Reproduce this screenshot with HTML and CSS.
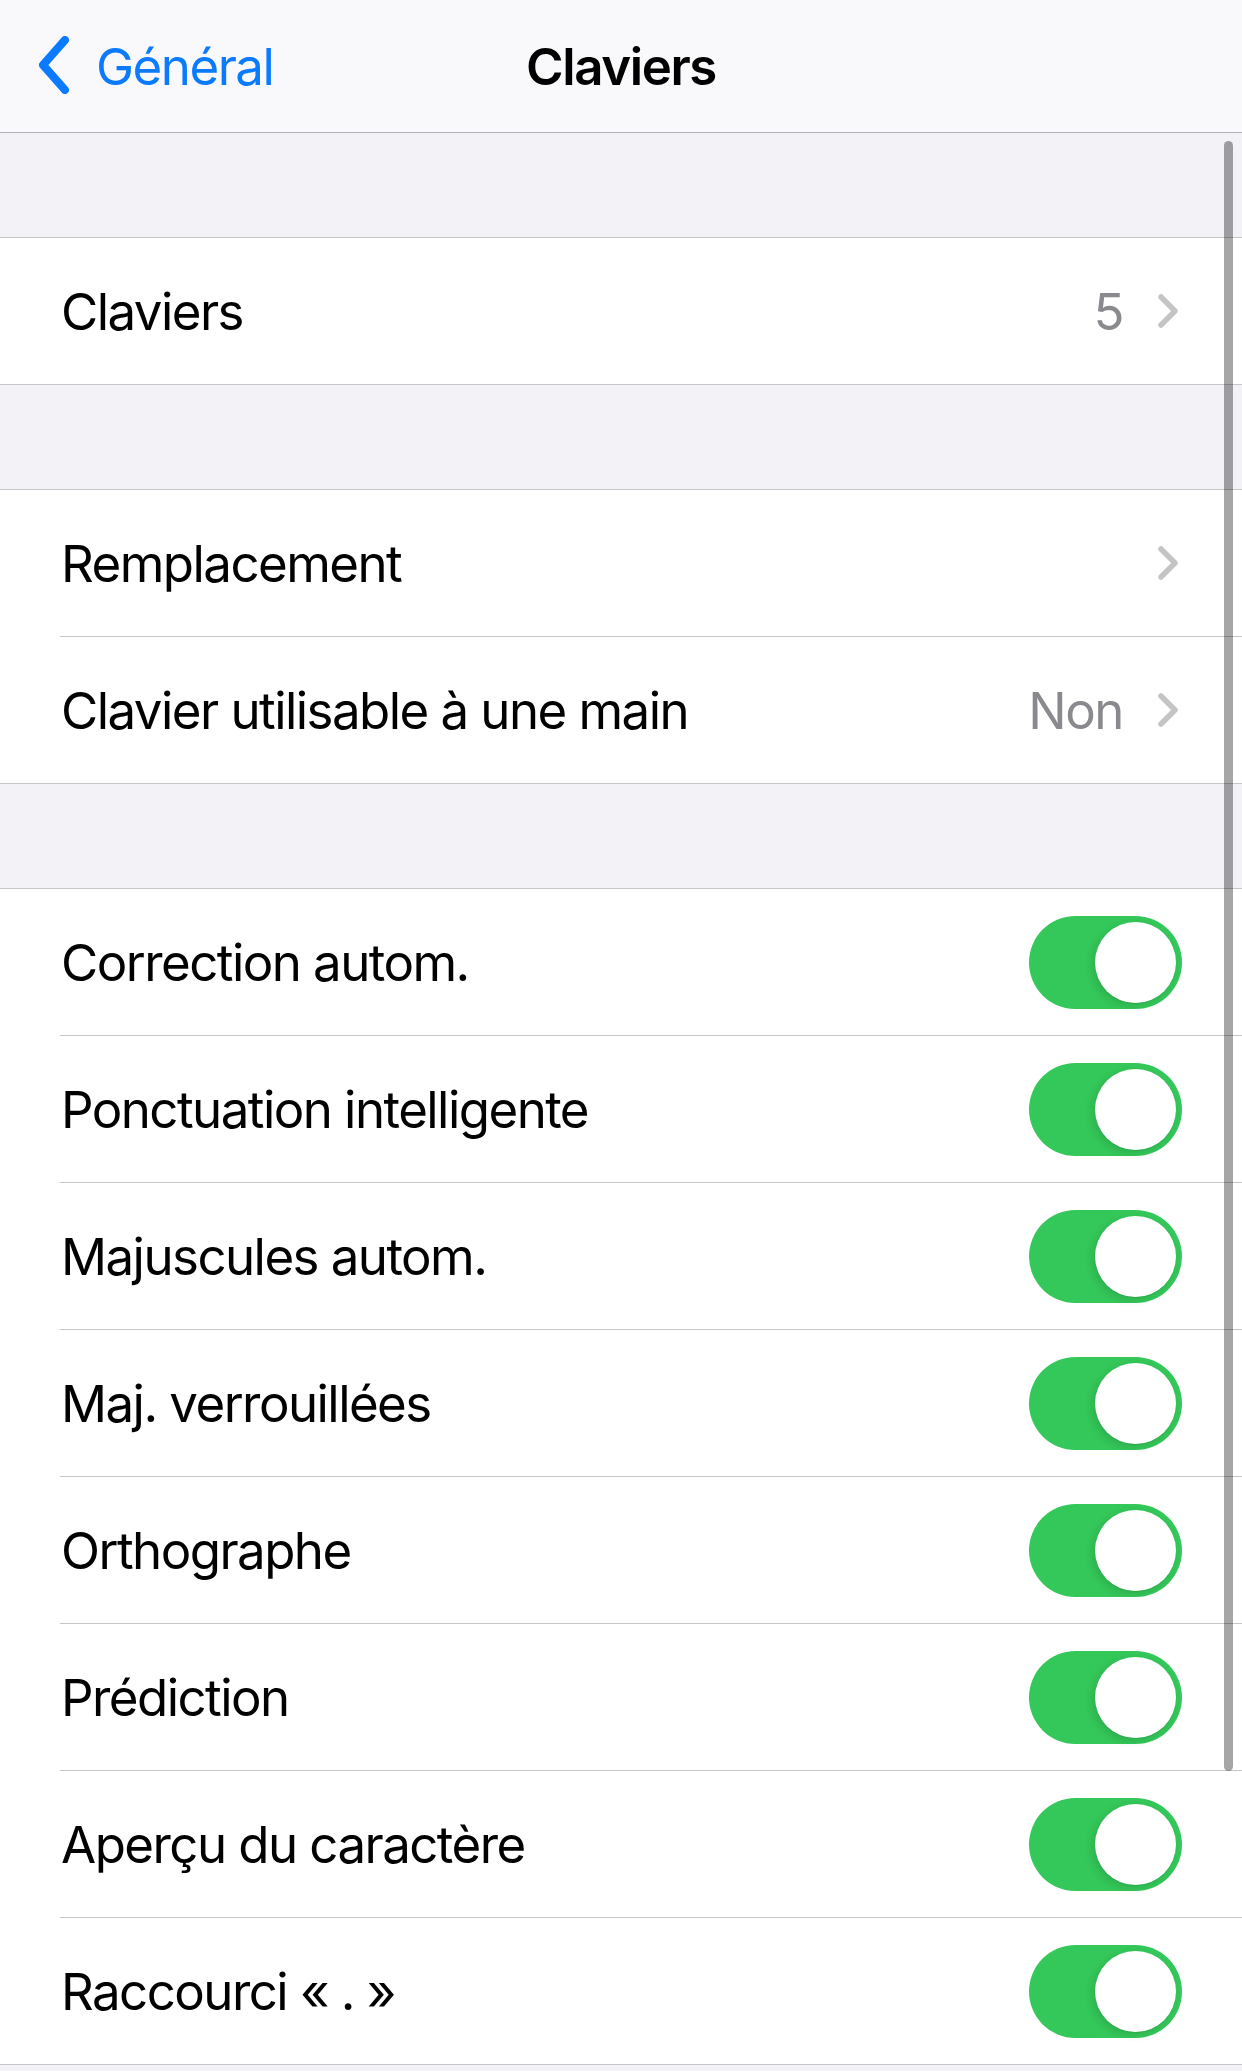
FILE: index.html
```html
<!DOCTYPE html>
<html lang="fr">
<head>
    <meta charset="UTF-8">
    <meta name="viewport" content="width=device-width, initial-scale=1.0">
    <title>Claviers</title>
    <link rel="stylesheet" href="styles.css">
</head>
<body>

<div class="navbar">
    <div class="back">
        <svg class="back-chevron" width="34" height="58" viewBox="0 0 34 58">
            <path d="M28 4 L6 29 L28 54" fill="none" stroke="#0a7aff" stroke-width="8" stroke-linecap="round" stroke-linejoin="round"/>
        </svg>
        <span>Général</span>
    </div>
    <div class="nav-title">Claviers</div>
</div>

<div class="section">
    <div class="row">
        <div class="row-inner">
            <span class="label">Claviers</span>
            <span class="value">5</span>
            <svg class="chevron" width="22" height="36" viewBox="0 0 22 36"><path d="M4 4 L18 18 L4 32" fill="none" stroke="#c4c4c7" stroke-width="5.5" stroke-linecap="round" stroke-linejoin="round"/></svg>
        </div>
    </div>
</div>

<div class="section">
    <div class="row">
        <div class="row-inner">
            <span class="label">Remplacement</span>
            <svg class="chevron" width="22" height="36" viewBox="0 0 22 36"><path d="M4 4 L18 18 L4 32" fill="none" stroke="#c4c4c7" stroke-width="5.5" stroke-linecap="round" stroke-linejoin="round"/></svg>
        </div>
    </div>
    <div class="row">
        <div class="row-inner">
            <span class="label">Clavier utilisable à une main</span>
            <span class="value">Non</span>
            <svg class="chevron" width="22" height="36" viewBox="0 0 22 36"><path d="M4 4 L18 18 L4 32" fill="none" stroke="#c4c4c7" stroke-width="5.5" stroke-linecap="round" stroke-linejoin="round"/></svg>
        </div>
    </div>
</div>

<div class="section">
    <div class="row">
        <div class="row-inner">
            <span class="label">Correction autom.</span>
            <div class="switch on"><div class="knob"></div></div>
        </div>
    </div>
    <div class="row">
        <div class="row-inner">
            <span class="label">Ponctuation intelligente</span>
            <div class="switch on"><div class="knob"></div></div>
        </div>
    </div>
    <div class="row">
        <div class="row-inner">
            <span class="label">Majuscules autom.</span>
            <div class="switch on"><div class="knob"></div></div>
        </div>
    </div>
    <div class="row">
        <div class="row-inner">
            <span class="label">Maj. verrouillées</span>
            <div class="switch on"><div class="knob"></div></div>
        </div>
    </div>
    <div class="row">
        <div class="row-inner">
            <span class="label">Orthographe</span>
            <div class="switch on"><div class="knob"></div></div>
        </div>
    </div>
    <div class="row">
        <div class="row-inner">
            <span class="label">Prédiction</span>
            <div class="switch on"><div class="knob"></div></div>
        </div>
    </div>
    <div class="row">
        <div class="row-inner">
            <span class="label">Aperçu du caractère</span>
            <div class="switch on"><div class="knob"></div></div>
        </div>
    </div>
    <div class="row">
        <div class="row-inner">
            <span class="label">Raccourci « . »</span>
            <div class="switch on"><div class="knob"></div></div>
        </div>
    </div>
</div>

<div class="scroll-indicator"></div>

</body>
</html>
```

FILE: styles.css
```css
body {
    font-family: Inter, 'Noto Sans', sans-serif;
    background-color: #f2f2f7;
    margin: 0;
    color: #000;
    position: relative;
    min-height: 2071px;
    overflow: hidden;
}
.navbar {
    height: 132px;
    background-color: #f9f9fb;
    border-bottom: 1px solid #b2b2b6;
    display: flex;
    align-items: center;
    justify-content: center;
    position: relative;
    margin-bottom: 104px;
}
.back {
    position: absolute;
    left: 37px;
    top: 0;
    height: 132px;
    display: flex;
    align-items: center;
    color: #0a7aff;
    font-size: 51px;
    letter-spacing: -1.5px;
}
.back-chevron {
    margin-right: 25px;
    margin-top: -2px;
}
.nav-title {
    font-size: 51px;
    font-weight: 600;
    letter-spacing: -1.4px;
}
.section {
    background-color: #fff;
    border-top: 1px solid #c6c6c8;
    border-bottom: 1px solid #c6c6c8;
    margin-bottom: 104px;
}
.row {
    padding-left: 60px;
}
.row-inner {
    height: 146px;
    display: flex;
    align-items: center;
    padding-right: 60px;
}
.row + .row .row-inner {
    border-top: 1px solid #c6c6c8;
}
.label {
    flex: 1;
    font-size: 51px;
    letter-spacing: -1.55px;
    margin-left: 1px;
}
.value {
    font-size: 51px;
    color: #8a8a8e;
    letter-spacing: -1.5px;
    margin-right: 34px;
}
.chevron {
    margin-right: 3px;
}
.switch {
    width: 153px;
    height: 93px;
    border-radius: 47px;
    background-color: #e9e9eb;
    display: flex;
    align-items: center;
    padding: 0 6px;
    box-sizing: border-box;
}
.switch.on {
    background-color: #34c759;
    justify-content: flex-end;
}
.knob {
    width: 81px;
    height: 81px;
    border-radius: 50%;
    background-color: #fff;
    box-shadow: -3px 3px 8px rgba(0, 0, 0, 0.12), 0 1px 1px rgba(0, 0, 0, 0.06);
}
.scroll-indicator {
    position: absolute;
    left: 1224px;
    top: 141px;
    width: 9px;
    height: 1630px;
    border-radius: 5px;
    background-color: rgba(0, 0, 0, 0.35);
}
```
